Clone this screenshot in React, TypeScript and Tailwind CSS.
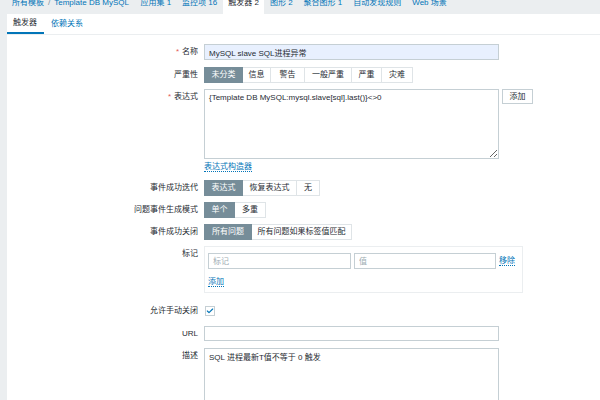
import { Check } from "lucide-react";

type Seg = { label: string; w: string; active?: boolean };

const navItems = [
  { label: "应用集 1" },
  { label: "监控项 16" },
  { label: "触发器 2", active: true },
  { label: "图形 2" },
  { label: "聚合图形 1" },
  { label: "自动发现规则" },
  { label: "Web 场景" },
];

const severities: Seg[] = [
  { label: "未分类", w: "w-[39px]", active: true },
  { label: "信息", w: "w-[28px]" },
  { label: "警告", w: "w-[34px]" },
  { label: "一般严重", w: "w-[47px]" },
  { label: "严重", w: "w-[30px]" },
  { label: "灾难", w: "w-[31px]" },
];

const okEvent: Seg[] = [
  { label: "表达式", w: "w-[39px]", active: true },
  { label: "恢复表达式", w: "w-[54px]" },
  { label: "无", w: "w-[23px]" },
];

const genMode: Seg[] = [
  { label: "单个", w: "w-[31px]", active: true },
  { label: "多重", w: "w-[31px]" },
];

const okClose: Seg[] = [
  { label: "所有问题", w: "w-[48px]", active: true },
  { label: "所有问题如果标签值匹配", w: "w-[100px]" },
];

const Segmented = ({ items }: { items: Seg[] }) => (
  <div className="flex h-[16px]">
    {items.map((it, i) => (
      <div
        key={it.label}
        className={`${it.w} flex items-center justify-center border ${i > 0 ? "border-l-0" : ""} ${
          it.active ? "bg-[#768d99] border-[#768d99] text-white" : "bg-white border-[#dfe4e7] text-[#1f2c33]"
        }`}
      >
        {it.label}
      </div>
    ))}
  </div>
);

const Row = ({
  label,
  required,
  top,
  className = "",
  children,
}: {
  label?: string;
  required?: boolean;
  top?: boolean;
  className?: string;
  children: React.ReactNode;
}) => (
  <div className={`flex ${className}`}>
    <div
      className={`w-[191px] shrink-0 flex justify-end text-[#1f2c33] ${top ? "items-start pt-[3px]" : "items-center"}`}
    >
      {required && <span className="text-[#e45959] mr-[3px]">*</span>}
      {label}
    </div>
    <div className="ml-[6px] flex items-start">{children}</div>
  </div>
);

export default function App() {
  return (
    <div className="w-[600px] h-[400px] overflow-hidden bg-[#ebeef0] text-[8px] leading-[10px] font-['Liberation_Sans','Noto_Sans_CJK_SC',sans-serif]">
      {/* Top navigation */}
      <div className="flex h-[14px] pl-[6px] text-[#0275b8]">
        <div className="px-[6px] -mt-[2px] h-[12px]">
          所有模板<span className="text-[#768d99] mx-[4px]">/</span>Template DB MySQL
        </div>
        {navItems.map((n) => (
          <div key={n.label} className={`px-[5.5px] h-[14px] ${n.active ? "bg-white text-[#1f2c33]" : ""}`}>
            <div className="-mt-[2px]">{n.label}</div>
          </div>
        ))}
      </div>

      <div className="ml-[7px] bg-white h-[386px]">
        {/* Tabs */}
        <div className="flex h-[21px] border-b border-[#ebeef0]">
          <div className="pl-[6px] pr-[7px] flex items-center border-b-2 border-[#0275b8] text-[#1f2c33]">触发器</div>
          <div className="px-[7px] flex items-center text-[#0275b8]">依赖关系</div>
        </div>

        {/* Form */}
        <div className="flex flex-col pt-[9px] text-[#1f2c33]">
          <Row label="名称" required>
            <input
              readOnly
              value="MySQL slave SQL进程异常"
              className="w-[295px] h-[16px] px-[4px] bg-[#e8f0fe] border border-[#c5cfd4] outline-none text-[#1f2c33]"
            />
          </Row>

          <Row label="严重性" className="mt-[7px]">
            <Segmented items={severities} />
          </Row>

          <Row label="表达式" required top className="mt-[6px]">
            <textarea
              readOnly
              defaultValue="{Template DB MySQL:mysql.slave[sql].last()}<>0"
              className="w-[295px] h-[70px] px-[4px] py-[3px] border border-[#c5cfd4] outline-none text-[#1f2c33] leading-[10px]"
            />
            <button className="ml-[3px] w-[31px] h-[15px] border border-[#c5cfd4] bg-white text-[#1f2c33] flex items-center justify-center">
              添加
            </button>
          </Row>

          <Row className="mt-[3px] h-[11px]">
            <span className="text-[#0275b8] border-b border-dotted border-[#0275b8] leading-[9px]">表达式构造器</span>
          </Row>

          <Row label="事件成功迭代" className="mt-[7px]">
            <Segmented items={okEvent} />
          </Row>

          <Row label="问题事件生成模式" className="mt-[6px]">
            <Segmented items={genMode} />
          </Row>

          <Row label="事件成功关闭" className="mt-[6px]">
            <Segmented items={okClose} />
          </Row>

          <Row label="标记" top className="mt-[6px]">
            <div className="w-[319px] h-[47px] border border-[#ebeef0] pt-[6px] pl-[3px]">
              <div className="flex items-center">
                <input
                  readOnly
                  placeholder="标记"
                  className="w-[143px] h-[16px] px-[4px] border border-[#c5cfd4] outline-none placeholder:text-[#a0adb3]"
                />
                <input
                  readOnly
                  placeholder="值"
                  className="ml-[3px] w-[142px] h-[16px] px-[4px] border border-[#c5cfd4] outline-none placeholder:text-[#a0adb3]"
                />
                <span className="ml-[3px] text-[#0275b8] border-b border-dotted border-[#0275b8] leading-[9px]">移除</span>
              </div>
              <div className="mt-[8px] flex">
                <span className="text-[#0275b8] border-b border-dotted border-[#0275b8] leading-[9px]">添加</span>
              </div>
            </div>
          </Row>

          <Row label="允许手动关闭" className="mt-[7px] h-[22px]">
            <div className="h-[22px] flex items-center">
              <div className="w-[10px] h-[10px] ml-[1px] border border-[#c5cfd4] flex items-center justify-center">
                <Check className="w-[8px] h-[8px] text-[#0275b8]" strokeWidth={3.5} />
              </div>
            </div>
          </Row>

          <Row label="URL" className="mt-[4px]">
            <input readOnly value="" className="w-[295px] h-[15px] px-[4px] border border-[#c5cfd4] outline-none" />
          </Row>

          <Row label="描述" top className="mt-[7px]">
            <textarea
              readOnly
              defaultValue="SQL 进程最新T值不等于 0 触发"
              className="w-[295px] h-[70px] px-[4px] py-[4px] border border-[#c5cfd4] outline-none text-[#1f2c33] leading-[10px]"
            />
          </Row>
        </div>
      </div>
    </div>
  );
}
